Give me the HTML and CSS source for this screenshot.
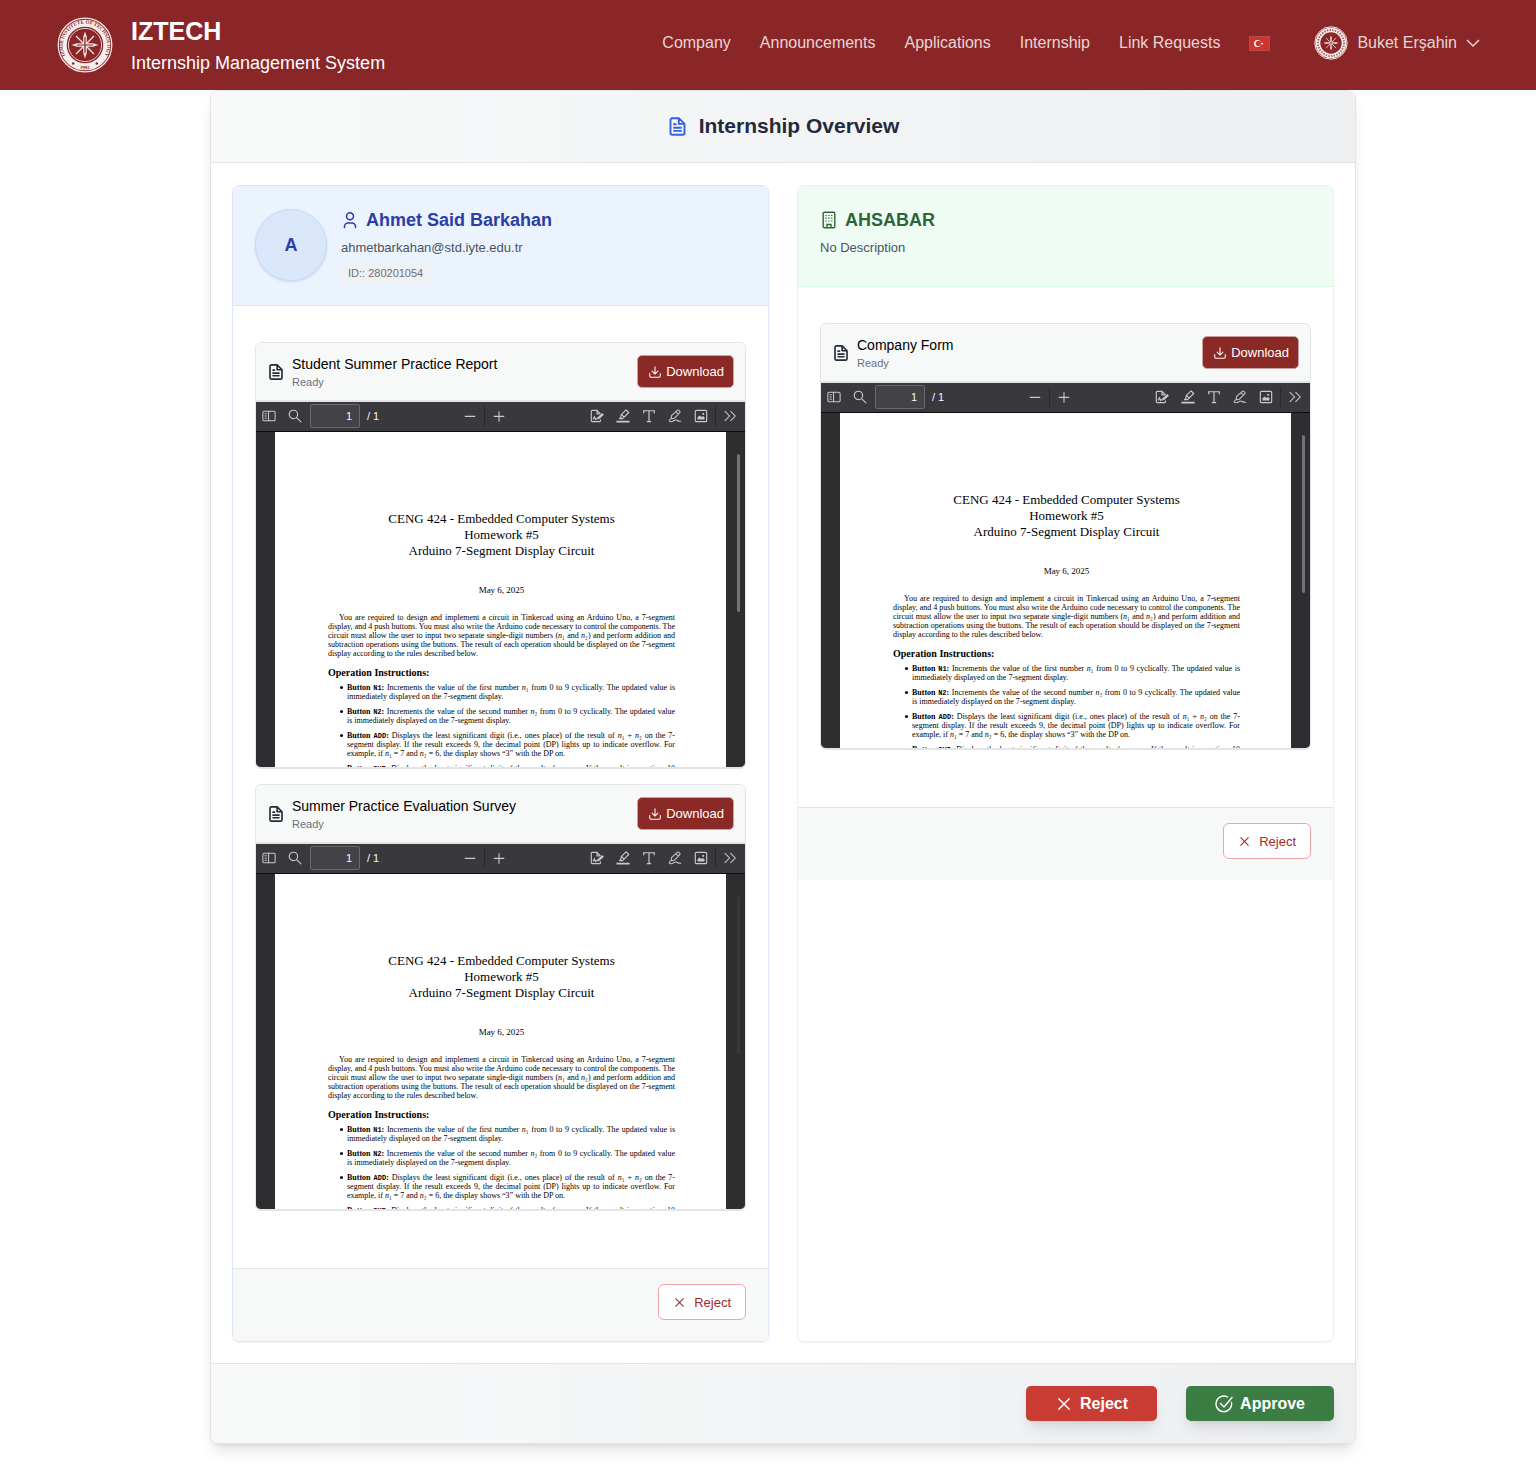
FILE: index.html
```
<!DOCTYPE html>
<html lang="en">
<head>
<meta charset="utf-8">
<meta name="viewport" content="width=device-width, initial-scale=1">
<title>Internship Overview - IZTECH</title>
<link rel="stylesheet" href="styles.css">
</head>
<body>
<svg class="sprite" aria-hidden="true">
  <symbol id="i-doc" viewBox="0 0 24 24"><path d="M13.5 2.5H6a2 2 0 0 0-2 2v15a2 2 0 0 0 2 2h12a2 2 0 0 0 2-2V9zM13.5 2.5V9H20M8 9.500h2M8 13.500h8M8 17h8" fill="none" stroke="currentColor" stroke-width="2.200" stroke-linejoin="round" stroke-linecap="round"/></symbol>
  <symbol id="i-download" viewBox="0 0 24 24"><path d="M12 3v12.500M7 10.500l5 5 5-5M3 14.500V19a2 2 0 0 0 2 2h14a2 2 0 0 0 2-2v-4.500" fill="none" stroke="currentColor" stroke-width="1.800" stroke-linejoin="round" stroke-linecap="round"/></symbol>
  <symbol id="i-x" viewBox="0 0 24 24"><path d="M5 5l14 14M19 5L5 19" fill="none" stroke="currentColor" stroke-width="2" stroke-linecap="round"/></symbol>
  <symbol id="i-side" viewBox="0 0 16 16"><path d="M2.500 2.500h11a1.500 1.500 0 0 1 1.500 1.500v8a1.500 1.500 0 0 1-1.500 1.500h-11A1.500 1.500 0 0 1 1 12V4a1.500 1.500 0 0 1 1.500-1.500zM7.500 2.500v11M3 5.500h2.500M3 8h2.500M3 10.500h2.500" fill="none" stroke="currentColor" stroke-width="1.200"/></symbol>
  <symbol id="i-search" viewBox="0 0 16 16"><path d="M11 6.200a4.800 4.800 0 1 1-9.600 0 4.800 4.800 0 0 1 9.600 0zM9.800 9.800l5 5" fill="none" stroke="currentColor" stroke-width="1.300" stroke-linecap="round"/></symbol>
  <symbol id="i-minus" viewBox="0 0 16 16"><path d="M2 8.500h12" stroke="currentColor" stroke-width="1.300"/></symbol>
  <symbol id="i-plus" viewBox="0 0 16 16"><path d="M2 8.500h12M8 2.500v12" stroke="currentColor" stroke-width="1.300"/></symbol>
  <symbol id="i-sign" viewBox="0 0 16 16"><path d="M12 5.500L8 1.500H2.500a1 1 0 0 0-1 1v11a1 1 0 0 0 1 1H11a1 1 0 0 0 1-1V12M8 1.500v4h3M3.500 12l1.500-3 1.500 3 1-1.500" fill="none" stroke="currentColor" stroke-width="1.300"/><path d="M8 12l.7-2.600L14 4.600l1.900 1.900-5.300 5z" fill="currentColor"/></symbol>
  <symbol id="i-mark" viewBox="0 0 16 16"><path d="M.5 13.500h15v2H.5z" fill="currentColor"/><path d="M6 6.500l5.500-5.500L14.500 4 9 9.500l-1.500 1.500H4l1.500-1.500zM6.500 6.500l3 3" fill="none" stroke="currentColor" stroke-width="1.300" stroke-linejoin="round"/></symbol>
  <symbol id="i-type" viewBox="0 0 16 16"><path d="M2 4.800V2h12v2.800M8 2v12.500M5.500 14.500h5" fill="none" stroke="currentColor" stroke-width="1.400"/></symbol>
  <symbol id="i-pen" viewBox="0 0 16 16"><path d="M3.500 11l.5-3.500 6.500-6a1.300 1.300 0 0 1 1.900 0l.9.900a1.300 1.300 0 0 1 0 1.900l-6 6.200zM9 3l3 3M3.500 11c-3 2-3 3.500 0 3.500 2.500 0 3.500-2 5.500-2s1.500 2 6 1.500" fill="none" stroke="currentColor" stroke-width="1.200" stroke-linejoin="round"/></symbol>
  <symbol id="i-image" viewBox="0 0 16 16"><path d="M3 1.500h10A1.500 1.500 0 0 1 14.500 3v10a1.500 1.500 0 0 1-1.500 1.500H3A1.500 1.500 0 0 1 1.500 13V3A1.500 1.500 0 0 1 3 1.500z" fill="none" stroke="currentColor" stroke-width="1.300"/><path d="M4 12V9.500l2.500-2 2 1.500 1.500-1 2 1.500V12zM9.500 4.500h2v2h-2z" fill="currentColor"/></symbol>
  <symbol id="i-more" viewBox="0 0 16 16"><path d="M2 2.500l5.500 5.500L2 13.500M8.500 2.500L14 8l-5.500 5.500" fill="none" stroke="currentColor" stroke-width="1.200"/></symbol>
  <symbol id="i-star" viewBox="0 0 28 28"><path d="M5 5l18 18M23 5L5 23" stroke="#f3e6e6" stroke-width="1.300"/><path d="M14 .5l1.800 5.500v6.200H22l5.500 1.800-5.500 1.800h-6.200V22L14 27.500 12.200 22v-6.200H6L.5 14 6 12.200h6.200V6z" fill="#f3e6e6"/><path d="M14 6v16M6 14h16" stroke="#8b2628" stroke-width="1.200"/></symbol>
</svg>

<header class="topbar">
  <a class="brand" href="#">
    <svg class="brand-logo" viewBox="0 0 56 56" role="img" aria-label="IZTECH seal">
      <defs>
        <path id="ring-top" d="M12.300 44.500A22.200 22.200 0 1 1 43.700 44.500"/>
        <path id="ring-foot" d="M18 50.200A24.500 24.500 0 0 0 38 50.200"/>
      </defs>
      <circle cx="28" cy="28" r="26.800" fill="none" stroke="#f3e6e6" stroke-width="1.300"/>
      <circle cx="28" cy="28" r="21.800" fill="none" stroke="#f7eeee" stroke-width="7"/>
      <circle cx="28" cy="28" r="16.600" fill="none" stroke="#e6cccc" stroke-width="1"/>
      <g class="seal-text">
        <text><textPath href="#ring-top" startOffset="7">IZMIR INSTITUTE OF TECHNOLOGY</textPath></text>
        <text><textPath href="#ring-foot" startOffset="5">1992</textPath></text>
      </g>
      <circle cx="16.200" cy="46.500" r="1.300" fill="#8b2628"/><circle cx="39.800" cy="46.500" r="1.300" fill="#8b2628"/>
      <use href="#i-star" x="14" y="14" width="28" height="28"/>
    </svg>
    <span class="brand-text"><strong>IZTECH</strong><span>Internship Management System</span></span>
  </a>
  <nav class="nav" aria-label="Main">
    <a href="#">Company</a>
    <a href="#">Announcements</a>
    <a href="#">Applications</a>
    <a href="#">Internship</a>
    <a href="#">Link Requests</a>
    <button class="lang" type="button" aria-label="Turkish">
      <svg viewBox="0 0 21 15" width="21" height="15"><rect width="21" height="15" fill="#ce3530"/><rect x=".5" y=".5" width="20" height="14" fill="none" stroke="#b94a45"/><circle cx="8.500" cy="7.500" r="3.500" fill="#fff"/><circle cx="9.500" cy="7.500" r="2.800" fill="#ce3530"/><path d="M13 6.300l.4.800 1 .1-.8.600.3 1-.9-.5-.9.500.3-1-.8-.6 1-.1z" fill="#fff"/></svg>
    </button>
    <button class="account" type="button">
      <svg viewBox="0 0 34 34" width="34" height="34" aria-hidden="true">
        <circle cx="17" cy="17" r="16.200" fill="none" stroke="#f3e6e6" stroke-width="1"/>
        <circle cx="17" cy="17" r="13" fill="none" stroke="#f7eeee" stroke-width="4.600"/>
        <circle cx="17" cy="17" r="13" fill="none" stroke="#a86466" stroke-width="2" stroke-dasharray="1.400 1.300"/>
        <use href="#i-star" x="9" y="9" width="16" height="16"/>
      </svg>
      <span>Buket Erşahin</span>
      <svg viewBox="0 0 14 14" width="14" height="14" aria-hidden="true"><path d="M1 4l6 6 6-6" fill="none" stroke="#e8d5d5" stroke-width="1.500"/></svg>
    </button>
  </nav>
</header>

<main class="overview">
  <header class="overview-head">
    <svg class="icon-title"><use href="#i-doc"/></svg>
    <h1>Internship Overview</h1>
  </header>

  <div class="columns">
    <section class="party party-student">
      <header class="party-head">
        <span class="avatar">A</span>
        <div class="party-info">
          <h2><svg class="icon-party" viewBox="0 0 18 18"><path d="M12.500 5.200a3.500 3.500 0 1 1-7 0 3.500 3.500 0 0 1 7 0zM3.500 16.500v-1a3.500 3.500 0 0 1 3.500-3.500h4a3.500 3.500 0 0 1 3.500 3.500v1" fill="none" stroke="currentColor" stroke-width="1.500" stroke-linecap="round"/></svg>Ahmet Said Barkahan</h2>
          <p>ahmetbarkahan@std.iyte.edu.tr</p>
          <span class="tag">ID:: 280201054</span>
        </div>
      </header>
      <div class="party-body">
        <article class="file">
          <header class="file-head">
            <svg class="icon-file"><use href="#i-doc"/></svg>
            <div class="file-name"><h3>Student Summer Practice Report</h3><p>Ready</p></div>
            <button class="btn-download" type="button"><svg><use href="#i-download"/></svg>Download</button>
          </header>
          <div class="viewer">
            <div class="toolbar">
              <div class="tools">
                <button type="button" aria-label="Toggle sidebar"><svg><use href="#i-side"/></svg></button>
                <button type="button" aria-label="Find"><svg><use href="#i-search"/></svg></button>
                <label class="pager"><input type="text" value="1" aria-label="Page"><span>/ 1</span></label>
              </div>
              <div class="tools">
                <button type="button" aria-label="Zoom out"><svg><use href="#i-minus"/></svg></button>
                <i class="split"></i>
                <button type="button" aria-label="Zoom in"><svg><use href="#i-plus"/></svg></button>
              </div>
              <div class="tools">
                <button type="button" aria-label="Sign"><svg><use href="#i-sign"/></svg></button>
                <button type="button" aria-label="Highlight"><svg><use href="#i-mark"/></svg></button>
                <button type="button" aria-label="Text"><svg><use href="#i-type"/></svg></button>
                <button type="button" aria-label="Draw"><svg><use href="#i-pen"/></svg></button>
                <button type="button" aria-label="Add image"><svg><use href="#i-image"/></svg></button>
                <i class="split"></i>
                <button type="button" aria-label="More tools"><svg><use href="#i-more"/></svg></button>
              </div>
            </div>
            <div class="stage">
              <div class="paper">
                <div class="paper-title"><span>CENG 424 - Embedded Computer Systems</span><span>Homework #5</span><span>Arduino 7-Segment Display Circuit</span></div>
                <p class="paper-date">May 6, 2025</p>
                <p class="para"><span class="first">You are required to design and implement a circuit in Tinkercad using an Arduino Uno, a 7-segment</span><span>display, and 4 push buttons. You must also write the Arduino code necessary to control the components. The</span><span>circuit must allow the user to input two separate single-digit numbers (<em>n</em>₁ and <em>n</em>₂) and perform addition and</span><span>subtraction operations using the buttons. The result of each operation should be displayed on the 7-segment</span><span class="last">display according to the rules described below.</span></p>
                <h4>Operation Instructions:</h4>
                <ul>
                  <li><span><b>Button <code>N1</code>:</b> Increments the value of the first number <em>n</em>₁ from 0 to 9 cyclically. The updated value is</span><span class="last">immediately displayed on the 7-segment display.</span></li>
                  <li><span><b>Button <code>N2</code>:</b> Increments the value of the second number <em>n</em>₂ from 0 to 9 cyclically. The updated value</span><span class="last">is immediately displayed on the 7-segment display.</span></li>
                  <li><span><b>Button <code>ADD</code>:</b> Displays the least significant digit (i.e., ones place) of the result of <em>n</em>₁ + <em>n</em>₂ on the 7-</span><span>segment display. If the result exceeds 9, the decimal point (DP) lights up to indicate overflow. For</span><span class="last">example, if <em>n</em>₁ = 7 and <em>n</em>₂ = 6, the display shows “3” with the DP on.</span></li>
                  <li><span><b>Button <code>SUB</code>:</b> Displays the least significant digit of the result of <em>n</em>₁ − <em>n</em>₂. If the result is negative, 10</span></li>
                </ul>
              </div>
              <i class="thumb"></i>
            </div>
          </div>
        </article>

        <article class="file">
          <header class="file-head">
            <svg class="icon-file"><use href="#i-doc"/></svg>
            <div class="file-name"><h3>Summer Practice Evaluation Survey</h3><p>Ready</p></div>
            <button class="btn-download" type="button"><svg><use href="#i-download"/></svg>Download</button>
          </header>
          <div class="viewer">
            <div class="toolbar">
              <div class="tools">
                <button type="button" aria-label="Toggle sidebar"><svg><use href="#i-side"/></svg></button>
                <button type="button" aria-label="Find"><svg><use href="#i-search"/></svg></button>
                <label class="pager"><input type="text" value="1" aria-label="Page"><span>/ 1</span></label>
              </div>
              <div class="tools">
                <button type="button" aria-label="Zoom out"><svg><use href="#i-minus"/></svg></button>
                <i class="split"></i>
                <button type="button" aria-label="Zoom in"><svg><use href="#i-plus"/></svg></button>
              </div>
              <div class="tools">
                <button type="button" aria-label="Sign"><svg><use href="#i-sign"/></svg></button>
                <button type="button" aria-label="Highlight"><svg><use href="#i-mark"/></svg></button>
                <button type="button" aria-label="Text"><svg><use href="#i-type"/></svg></button>
                <button type="button" aria-label="Draw"><svg><use href="#i-pen"/></svg></button>
                <button type="button" aria-label="Add image"><svg><use href="#i-image"/></svg></button>
                <i class="split"></i>
                <button type="button" aria-label="More tools"><svg><use href="#i-more"/></svg></button>
              </div>
            </div>
            <div class="stage">
              <div class="paper">
                <div class="paper-title"><span>CENG 424 - Embedded Computer Systems</span><span>Homework #5</span><span>Arduino 7-Segment Display Circuit</span></div>
                <p class="paper-date">May 6, 2025</p>
                <p class="para"><span class="first">You are required to design and implement a circuit in Tinkercad using an Arduino Uno, a 7-segment</span><span>display, and 4 push buttons. You must also write the Arduino code necessary to control the components. The</span><span>circuit must allow the user to input two separate single-digit numbers (<em>n</em>₁ and <em>n</em>₂) and perform addition and</span><span>subtraction operations using the buttons. The result of each operation should be displayed on the 7-segment</span><span class="last">display according to the rules described below.</span></p>
                <h4>Operation Instructions:</h4>
                <ul>
                  <li><span><b>Button <code>N1</code>:</b> Increments the value of the first number <em>n</em>₁ from 0 to 9 cyclically. The updated value is</span><span class="last">immediately displayed on the 7-segment display.</span></li>
                  <li><span><b>Button <code>N2</code>:</b> Increments the value of the second number <em>n</em>₂ from 0 to 9 cyclically. The updated value</span><span class="last">is immediately displayed on the 7-segment display.</span></li>
                  <li><span><b>Button <code>ADD</code>:</b> Displays the least significant digit (i.e., ones place) of the result of <em>n</em>₁ + <em>n</em>₂ on the 7-</span><span>segment display. If the result exceeds 9, the decimal point (DP) lights up to indicate overflow. For</span><span class="last">example, if <em>n</em>₁ = 7 and <em>n</em>₂ = 6, the display shows “3” with the DP on.</span></li>
                  <li><span><b>Button <code>SUB</code>:</b> Displays the least significant digit of the result of <em>n</em>₁ − <em>n</em>₂. If the result is negative, 10</span></li>
                </ul>
              </div>
              <i class="thumb thumb-faded"></i>
            </div>
          </div>
        </article>
      </div>
      <footer class="party-foot"><button class="btn-outline" type="button"><svg><use href="#i-x"/></svg>Reject</button></footer>
    </section>

    <section class="party party-company">
      <header class="party-head">
        <div class="party-info">
          <h2><svg class="icon-party" viewBox="0 0 18 18"><path d="M4.500 1.200h9A1.300 1.300 0 0 1 14.800 2.500v13a1.300 1.300 0 0 1-1.300 1.300h-9a1.300 1.300 0 0 1-1.300-1.300v-13a1.300 1.300 0 0 1 1.300-1.300zM7 16.500v-3h4v3" fill="none" stroke="currentColor" stroke-width="1.400"/><path d="M5.500 4.500h7.500M5.500 7.200h7.500M5.500 10h7.500" stroke="currentColor" stroke-width="1.200" stroke-dasharray="1.300 1.500"/></svg>AHSABAR</h2>
          <p>No Description</p>
        </div>
      </header>
      <div class="party-body">
        <article class="file">
          <header class="file-head">
            <svg class="icon-file"><use href="#i-doc"/></svg>
            <div class="file-name"><h3>Company Form</h3><p>Ready</p></div>
            <button class="btn-download" type="button"><svg><use href="#i-download"/></svg>Download</button>
          </header>
          <div class="viewer">
            <div class="toolbar">
              <div class="tools">
                <button type="button" aria-label="Toggle sidebar"><svg><use href="#i-side"/></svg></button>
                <button type="button" aria-label="Find"><svg><use href="#i-search"/></svg></button>
                <label class="pager"><input type="text" value="1" aria-label="Page"><span>/ 1</span></label>
              </div>
              <div class="tools">
                <button type="button" aria-label="Zoom out"><svg><use href="#i-minus"/></svg></button>
                <i class="split"></i>
                <button type="button" aria-label="Zoom in"><svg><use href="#i-plus"/></svg></button>
              </div>
              <div class="tools">
                <button type="button" aria-label="Sign"><svg><use href="#i-sign"/></svg></button>
                <button type="button" aria-label="Highlight"><svg><use href="#i-mark"/></svg></button>
                <button type="button" aria-label="Text"><svg><use href="#i-type"/></svg></button>
                <button type="button" aria-label="Draw"><svg><use href="#i-pen"/></svg></button>
                <button type="button" aria-label="Add image"><svg><use href="#i-image"/></svg></button>
                <i class="split"></i>
                <button type="button" aria-label="More tools"><svg><use href="#i-more"/></svg></button>
              </div>
            </div>
            <div class="stage">
              <div class="paper">
                <div class="paper-title"><span>CENG 424 - Embedded Computer Systems</span><span>Homework #5</span><span>Arduino 7-Segment Display Circuit</span></div>
                <p class="paper-date">May 6, 2025</p>
                <p class="para"><span class="first">You are required to design and implement a circuit in Tinkercad using an Arduino Uno, a 7-segment</span><span>display, and 4 push buttons. You must also write the Arduino code necessary to control the components. The</span><span>circuit must allow the user to input two separate single-digit numbers (<em>n</em>₁ and <em>n</em>₂) and perform addition and</span><span>subtraction operations using the buttons. The result of each operation should be displayed on the 7-segment</span><span class="last">display according to the rules described below.</span></p>
                <h4>Operation Instructions:</h4>
                <ul>
                  <li><span><b>Button <code>N1</code>:</b> Increments the value of the first number <em>n</em>₁ from 0 to 9 cyclically. The updated value is</span><span class="last">immediately displayed on the 7-segment display.</span></li>
                  <li><span><b>Button <code>N2</code>:</b> Increments the value of the second number <em>n</em>₂ from 0 to 9 cyclically. The updated value</span><span class="last">is immediately displayed on the 7-segment display.</span></li>
                  <li><span><b>Button <code>ADD</code>:</b> Displays the least significant digit (i.e., ones place) of the result of <em>n</em>₁ + <em>n</em>₂ on the 7-</span><span>segment display. If the result exceeds 9, the decimal point (DP) lights up to indicate overflow. For</span><span class="last">example, if <em>n</em>₁ = 7 and <em>n</em>₂ = 6, the display shows “3” with the DP on.</span></li>
                  <li><span><b>Button <code>SUB</code>:</b> Displays the least significant digit of the result of <em>n</em>₁ − <em>n</em>₂. If the result is negative, 10</span></li>
                </ul>
              </div>
              <i class="thumb"></i>
            </div>
          </div>
        </article>
      </div>
      <footer class="party-foot"><button class="btn-outline" type="button"><svg><use href="#i-x"/></svg>Reject</button></footer>
    </section>
  </div>

  <footer class="overview-foot">
    <button class="btn btn-reject" type="button"><svg><use href="#i-x"/></svg>Reject</button>
    <button class="btn btn-approve" type="button"><svg viewBox="0 0 18 18"><path d="M16.500 7.500A7.800 7.800 0 1 1 12.500 2M5.500 8.500L9 12l8-9.500" fill="none" stroke="currentColor" stroke-width="1.400" stroke-linecap="round" stroke-linejoin="round"/></svg>Approve</button>
  </footer>
</main>
</body>
</html>
```

FILE: styles.css
```
*, *::before, *::after { box-sizing: border-box; }
body { margin: 0; background: #fff; color: #111; font-family: "Liberation Sans", Arial, sans-serif; }
h1, h2, h3, h4, p, ul { margin: 0; padding: 0; }
button { font: inherit; border: 0; padding: 0; background: none; color: inherit; cursor: pointer; }
a { color: inherit; text-decoration: none; }
svg { display: block; flex: none; }
.sprite { display: none; }

/* top bar */
.topbar { display: flex; align-items: center; justify-content: space-between; height: 90px; padding: 0 56px 0 57px; background: #8b2628; color: #fff; }
.brand { display: flex; align-items: center; gap: 18px; }
.brand-logo { width: 56px; height: 56px; }
.seal-text { font: bold 5px "Liberation Serif", serif; fill: #8b2628; }
.brand-text { display: flex; flex-direction: column; font-size: 18px; line-height: 33px; padding-top: 4px; }
.brand-text strong { font-size: 25px; line-height: 32px; }
.nav { display: flex; align-items: center; gap: 29px; padding-bottom: 4px; font-size: 16px; color: #e8d5d5; }
.account { display: flex; align-items: center; gap: 9px; margin-left: 15px; }

/* overview card */
.overview { margin: 0 180px 40px 210px; border: 1px solid #e2e4e6; border-radius: 8px; background: #fff; box-shadow: 0 10px 15px -3px rgba(0, 0, 0, .1), 0 4px 6px -4px rgba(0, 0, 0, .1); }
.overview-head, .overview-foot { background: linear-gradient(to right, #f8f9f9, #f3f4f5 50%, #eeeff1); }
.overview-head { display: flex; align-items: center; justify-content: center; gap: 11px; height: 72px; padding-bottom: 1px; border-bottom: 1px solid #e2e4e6; border-radius: 7px 7px 0 0; }
.overview-head h1 { font-size: 21px; line-height: 28px; color: #25293a; }
.icon-title { width: 21px; height: 21px; color: #3661e0; }
.overview-foot { display: flex; justify-content: flex-end; gap: 29px; padding: 22px 21px; border-top: 1px solid #e2e4e6; border-radius: 0 0 7px 7px; }
.columns { display: grid; grid-template-columns: 1fr 1fr; gap: 28px; padding: 22px 21px 21px; }

/* student / company panels */
.party { display: flex; flex-direction: column; border: 1px solid #dce8fa; border-radius: 7px; overflow: hidden; box-shadow: 0 1px 2px rgba(0, 0, 0, .06); }
.party-company { border-color: #dffae7; }
.party-head { display: flex; align-items: flex-start; gap: 14px; padding: 23px 22px 22px; background: #ebf3fe; border-bottom: 1px solid #d6e5fb; }
.party-company .party-head { padding-bottom: 28px; background: #eefcf3; border-color: #d8f9e2; }
.avatar { display: flex; align-items: center; justify-content: center; width: 72px; height: 72px; border: 1px solid #c5dbfa; border-radius: 50%; background: #dae7fa; color: #2b3ea8; font-size: 18px; font-weight: bold; box-shadow: 0 1px 3px rgba(0, 0, 0, .12); }
.party-info h2 { display: flex; align-items: center; gap: 7px; font-size: 18px; line-height: 22px; color: #2b3ea8; }
.party-company h2 { color: #2f6439; }
.icon-party { width: 18px; height: 18px; }
.party-info p { margin-top: 7px; font-size: 13px; line-height: 20px; color: #4a5361; }
.tag { display: inline-block; margin-top: 5px; padding: 0 7px; border-radius: 3px; background: #eff1f2; font-size: 11px; line-height: 20px; color: #69707c; vertical-align: top; }
.party-body { display: flex; flex-direction: column; gap: 15px; padding: 36px 22px 57px; }
.party-foot { display: flex; justify-content: flex-end; padding: 15px 22px 21px; border-top: 1px solid #e2e4e6; background: #f7f9f9; }
.party-student .party-foot { margin-top: auto; }

/* file preview */
.file { border: 1px solid #e2e4e8; border-bottom-width: 2px; border-radius: 6px; overflow: hidden; }
.file-head { display: flex; align-items: center; gap: 7px; height: 59px; padding: 0 11px; border-bottom: 2px solid #e2e4e8; background: #f7f9f9; }
.icon-file { width: 18px; height: 18px; color: #252b38; }
.file-name { flex: 1; }
.file-name h3 { font-size: 14px; font-weight: normal; line-height: 20px; color: #000; }
.file-name p { font-size: 11px; line-height: 16px; color: #69707c; }
.btn-download { display: flex; align-items: center; justify-content: center; gap: 4px; height: 33px; padding: 0 9px 0 10px; border: 1px solid #c9a3a4; border-radius: 5px; background: #8b2926; color: #fff; font-size: 13px; }
.btn-download svg { width: 14px; height: 14px; }

.toolbar { display: flex; align-items: center; justify-content: space-between; height: 30px; padding: 0 8px 1px 6px; border-bottom: 1px solid #0c0c0d; background: #38383d; color: #c9c9cb; }
.tools { display: flex; align-items: center; gap: 12px; }
.tools svg { width: 14px; height: 14px; }
.split { width: 1px; height: 20px; margin: 0 -5px; background: #29292d; }
.pager { display: flex; align-items: center; gap: 7px; margin-left: -4px; font-size: 11px; color: #f9f9fa; }
.pager input { width: 50px; height: 24px; padding: 0 7px; border: 1px solid #6b6b6f; border-radius: 2px; background: #434347; color: #f9f9fa; font: inherit; text-align: right; }
.stage { position: relative; height: 335px; padding: 0 19px; background: #2e2e31; overflow: hidden; }
.thumb { position: absolute; top: 22px; right: 5px; width: 3px; height: 158px; border-radius: 2px; background: #737376; }
.thumb-faded { background: #38383b; }

/* document page */
.paper { min-height: 335px; padding: 79px 51px 0 53px; background: #fff; color: #000; font-family: "Liberation Serif", "Times New Roman", serif; font-size: 8px; line-height: 9px; white-space: nowrap; }
.paper span { display: block; height: 9px; text-align: justify; text-align-last: justify; }
.paper .paper-title span { height: 16px; text-align: center; text-align-last: center; font-size: 13px; line-height: 16px; }
.paper-date { margin-top: 27px; text-align: center; font-size: 9px; }
.para { margin-top: 18px; }
.paper .first { padding-left: 11px; }
.paper .last { text-align-last: left; }
.paper h4 { margin: 9px 0 5px; font-size: 10px; line-height: 11px; }
.paper ul { list-style: none; }
.paper li { position: relative; margin-bottom: 6px; padding-left: 19px; }
.paper li::before { content: ""; position: absolute; left: 12px; top: 3px; width: 3px; height: 3px; border-radius: 50%; background: #000; }
.paper code { font-family: "Liberation Mono", monospace; font-size: 7px; line-height: 1px; }

/* actions */
.btn-outline { display: flex; align-items: center; gap: 8px; height: 36px; padding: 0 14px; border: 1px solid #efa5a3; border-radius: 6px; background: #fff; color: #a3292a; font-size: 13px; }
.btn-outline svg { width: 13px; height: 13px; }
.btn { display: flex; align-items: center; gap: 7px; height: 35px; padding: 0 29px; border-radius: 5px; color: #fff; font-size: 16px; font-weight: bold; box-shadow: 0 10px 15px -3px rgba(0, 0, 0, .1), 0 4px 6px -4px rgba(0, 0, 0, .1); }
.btn svg { width: 18px; height: 18px; }
.btn-reject { background: #c83c34; }
.btn-approve { background: #3c7d44; }
```
